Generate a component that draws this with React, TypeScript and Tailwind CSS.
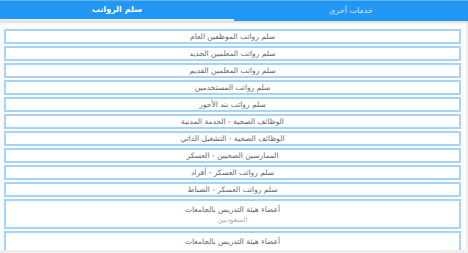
import React from 'react';

const items: { title: string; sub?: string; tall?: boolean }[] = [
  { title: 'سلم رواتب الموظفين العام' },
  { title: 'سلم رواتب المعلمين الجديد' },
  { title: 'سلم رواتب المعلمين القديم' },
  { title: 'سلم رواتب المستخدمين' },
  { title: 'سلم رواتب بند الأجور' },
  { title: 'الوظائف الصحية - الخدمة المدنية' },
  { title: 'الوظائف الصحية - التشغيل الذاتي' },
  { title: 'الممارسين الصحيين - العسكر' },
  { title: 'سلم رواتب العسكر - أفراد' },
  { title: 'سلم رواتب العسكر - الضباط' },
  { title: 'أعضاء هيئة التدريس بالجامعات', sub: 'السعوديين', tall: true },
  { title: 'أعضاء هيئة التدريس بالجامعات', tall: true },
];

const App: React.FC = () => {
  return (
    <div
      className="w-[468px] h-[253px] overflow-hidden bg-[#fbfbfb] flex flex-col"
      style={{ fontFamily: '"DejaVu Sans", "Noto Sans", sans-serif' }}
    >
      {/* Tabs */}
      <div className="h-[21px] shrink-0 bg-[#2196f3] border-t border-[#5db1f6] flex shadow-[0_1px_3px_rgba(0,0,0,0.2)] z-10">
        <div className="flex-1 flex items-center justify-center text-white text-[8px] font-bold border-b-2 border-[#e3f1fd]">
          سلم الرواتب
        </div>
        <div className="flex-1 flex items-center justify-center text-white/80 text-[8px]">
          خدمات أخرى
        </div>
      </div>

      {/* List */}
      <div className="flex-1 overflow-hidden pt-[8px] pl-[4px] pr-[5px] border-r-2 border-[#eeeeee]">
        <div className="flex flex-col gap-[2px]">
          {items.map((item, i) => (
            <div
              key={i}
              dir="rtl"
              className={
                item.tall
                  ? 'h-[30px] shrink-0 bg-white border-2 border-[#a6d3f8] flex flex-col items-center justify-start pt-[4px] leading-[10px]'
                  : 'h-[15px] shrink-0 bg-white border-2 border-[#a6d3f8] flex items-center justify-center'
              }
            >
              <span className="text-[7.5px] text-[#666666]">{item.title}</span>
              {item.sub && <span className="text-[7px] text-[#aaaaaa]">{item.sub}</span>}
            </div>
          ))}
        </div>
      </div>
      <div className="h-[3px] shrink-0 bg-[#eeeeee]" />
    </div>
  );
};

export default App;
